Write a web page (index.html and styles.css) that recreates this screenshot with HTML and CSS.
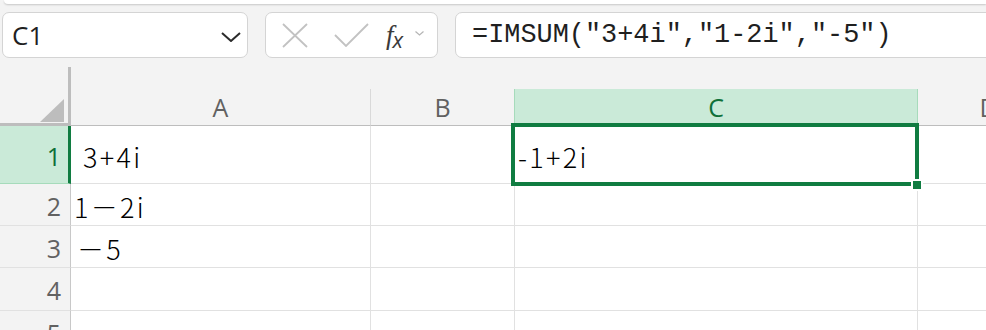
FILE: index.html
```html
<!DOCTYPE html>
<html lang="ja">
<head>
  <meta charset="UTF-8">
  <title>IMSUM</title>
  <link rel="stylesheet" href="styles.css">
</head>
<body>

<div class="ribbon"></div>

<!-- 數式列 -->
<div class="formula-bar">
  <div class="name-box">
    <span class="name-text">C1</span>
    <svg class="name-chevron" width="20" height="10" viewBox="0 0 20 10">
      <polyline points="1,1 10,9 19,1" fill="none" stroke="#2b2b2b" stroke-width="2"/>
    </svg>
  </div>
  <div class="fx-box">
    <svg class="fx-cancel" width="26" height="25" viewBox="0 0 26 25">
      <path d="M1 1 L25 24 M25 1 L1 24" fill="none" stroke="#c2c2c2" stroke-width="1.8"/>
    </svg>
    <svg class="fx-enter" width="35" height="24" viewBox="0 0 35 24">
      <polyline points="1,12 12,23 34,1" fill="none" stroke="#c2c2c2" stroke-width="1.8"/>
    </svg>
    <span class="fx-label"><i>f</i><i class="fx-x">x</i></span>
    <svg class="fx-chevron" width="9" height="5" viewBox="0 0 9 5">
      <polyline points="0.5,0.5 4.5,4 8.5,0.5" fill="none" stroke="#b5b5b5" stroke-width="1.2"/>
    </svg>
  </div>
  <div class="formula-input">=IMSUM("3+4i","1-2i","-5")</div>
</div>

<!-- 工作表 -->
<div class="sheet">
  <div class="grid">
    <div class="corner">
      <svg width="24" height="23" viewBox="0 0 24 23"><polygon points="0,23 24,23 24,0" fill="#bdbdbd"/></svg>
    </div>
    <div class="col-head">A</div>
    <div class="col-head">B</div>
    <div class="col-head active">C</div>
    <div class="col-head">D</div>

    <div class="row-head active">1</div>
    <div class="cell indent">3+4i</div>
    <div class="cell"></div>
    <div class="cell">-1+2i</div>
    <div class="cell"></div>

    <div class="row-head">2</div>
    <div class="cell">1－2i</div>
    <div class="cell"></div>
    <div class="cell"></div>
    <div class="cell"></div>

    <div class="row-head">3</div>
    <div class="cell nudge">－5</div>
    <div class="cell"></div>
    <div class="cell"></div>
    <div class="cell"></div>

    <div class="row-head">4</div>
    <div class="cell"></div>
    <div class="cell"></div>
    <div class="cell"></div>
    <div class="cell"></div>

    <div class="row-head">5</div>
    <div class="cell"></div>
    <div class="cell"></div>
    <div class="cell"></div>
    <div class="cell"></div>
  </div>

  <div class="selection"></div>
  <div class="fill-handle"></div>
</div>

</body>
</html>
```

FILE: styles.css
```css
* { box-sizing: border-box; margin: 0; padding: 0; }

body {
  background: #f3f3f3;
  width: 986px;
  height: 330px;
  overflow: hidden;
  font-family: "Open Sans", "Noto Sans", sans-serif;
}

.ribbon {
  height: 4px;
  margin-left: 4px;
  background: #fff;
  border-radius: 0 0 0 8px;
  box-shadow: 0 1px 2px rgba(0,0,0,0.18);
}

/* formula bar */
.formula-bar {
  display: flex;
  gap: 17px;
  height: 46px;
  margin-top: 8px;
  padding-left: 2px;
}

.name-box,
.fx-box,
.formula-input {
  flex-shrink: 0;
  background: #fff;
  border: 1.5px solid #d4d4d4;
  border-radius: 7px;
  display: flex;
  align-items: center;
}

.name-box {
  width: 246px;
  padding: 0 6px 0 9px;
  justify-content: space-between;
}

.name-text {
  font-size: 26px;
  color: #1f1f1f;
  margin-top: -1px;
}

.name-chevron { margin-top: 3px; }

.fx-box {
  width: 173px;
  padding-left: 16px;
}

.fx-enter { margin-left: 26px; }

.fx-label {
  margin-left: 17px;
  font-family: "Liberation Serif", serif;
  font-size: 27px;
  color: #3a3a3a;
  letter-spacing: -1px;
}

.fx-x {
  position: relative;
  top: 4px;
  font-family: "Open Sans", sans-serif;
  font-size: 22px;
}

.fx-chevron { margin-left: 13px; margin-top: -3px; }

.formula-input {
  width: 620px;
  padding-left: 16px;
  font-family: "Liberation Mono", monospace;
  font-size: 26.9px;
  color: #1f1f1f;
  white-space: pre;
}

/* sheet */
.sheet {
  position: relative;
  margin-top: 9px;
}

.grid {
  display: grid;
  grid-template-columns: 71px 300px 144px 403px 142px;
  grid-template-rows: 59px 58px 42px 42px 43px 42px;
}

.corner {
  border-right: 3px solid #bdbdbd;
  border-bottom: 3px solid #bdbdbd;
  display: flex;
  justify-content: flex-end;
  align-items: flex-end;
  padding: 0 4px 1px 0;
}

.col-head {
  align-self: end;
  height: 37px;
  border-right: 1px solid #d9d9d9;
  border-bottom: 1px solid #bdbdbd;
  display: flex;
  justify-content: center;
  align-items: center;
  font-size: 25px;
  color: #616161;
}

.col-head.active {
  background: #caead8;
  color: #0f7038;
  border-left: 1px solid #a6dbbb;
  border-right-color: #a6dbbb;
  margin-left: -1px;
}

.row-head {
  border-right: 1px solid #c8c8c8;
  border-bottom: 1px solid #e1e1e1;
  display: flex;
  justify-content: flex-end;
  align-items: center;
  padding: 2px 9px 0 0;
  font-size: 25px;
  color: #616161;
}

.row-head.active {
  background: #caead8;
  color: #0f7038;
  border-right: 3px solid #107c41;
  border-bottom-color: #a6dbbb;
  padding-right: 7px;
}

.cell {
  background: #fff;
  border-right: 1px solid #e1e1e1;
  border-bottom: 1px solid #e1e1e1;
  display: flex;
  align-items: center;
  padding: 3px 0 0 3px;
  font-family: "Noto Sans CJK JP", sans-serif;
  font-weight: 300;
  font-size: 27px;
  letter-spacing: 2.3px;
  color: #000;
  white-space: pre;
  overflow: hidden;
}

.cell.indent { padding-left: 12px; }
.cell.nudge { padding-left: 6px; }

/* active cell frame */
.selection {
  position: absolute;
  left: 511px;
  top: 56px;
  width: 408px;
  height: 63px;
  border: 4px solid #107c41;
}

.fill-handle {
  position: absolute;
  left: 911px;
  top: 112px;
  width: 12px;
  height: 12px;
  background: #107c41;
  border: 2px solid #fff;
}
```
